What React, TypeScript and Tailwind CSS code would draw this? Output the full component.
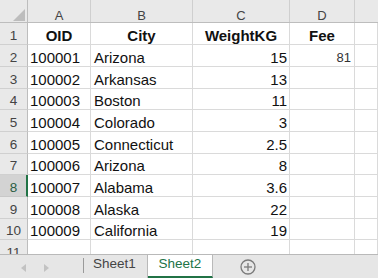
import React from "react";

const rows: { id: string; city: string; w: string; fee?: string }[] = [
  { id: "100001", city: "Arizona", w: "15", fee: "81" },
  { id: "100002", city: "Arkansas", w: "13" },
  { id: "100003", city: "Boston", w: "11" },
  { id: "100004", city: "Colorado", w: "3" },
  { id: "100005", city: "Connecticut", w: "2.5" },
  { id: "100006", city: "Arizona", w: "8" },
  { id: "100007", city: "Alabama", w: "3.6" },
  { id: "100008", city: "Alaska", w: "22" },
  { id: "100009", city: "California", w: "19" },
];

const heights = [22, 22, 22, 21, 22, 22, 21, 22, 22, 21, 22];

const cell = "border-r border-b border-[#dadada] flex items-end leading-[17px] overflow-hidden whitespace-nowrap";

function RowHead({ n, selected }: { n: number; selected?: boolean }) {
  return (
    <div
      className={
        "w-[28px] shrink-0 border-r border-b flex items-end justify-center leading-[17px] text-[13.5px] " +
        (selected
          ? "bg-[#d3d3d3] border-r-[#217346] border-r-2 w-[28px] text-[#2b5d44] border-b-[#c8c8c8]"
          : "bg-[#e9e9e9] border-r-[#bdbdbd] border-b-[#d0d0d0] text-[#444]")
      }
    >
      <span className={selected ? "pl-[1px]" : ""}>{n}</span>
    </div>
  );
}

export default function App() {
  return (
    <div
      className="w-[378px] h-[278px] overflow-hidden bg-white flex flex-col text-[#111]"
      style={{ fontFamily: '"Liberation Sans", Arial, sans-serif' }}
    >
      <div className="h-[254px] overflow-hidden flex flex-col shrink-0">
        {/* column header */}
        <div className="h-[23px] shrink-0 flex bg-[#e9e9e9] border-b border-[#bdbdbd] text-[13px] text-[#444] leading-[13px]">
          <div className="w-[28px] shrink-0 border-r border-[#bdbdbd] relative">
            <svg className="absolute left-[13px] top-[9px]" width="12" height="12" viewBox="0 0 12 12">
              <polygon points="12,0 12,12 0,12" fill="#bdbdbd" />
            </svg>
          </div>
          <div className="w-[63px] shrink-0 border-r border-[#cfcfcf] flex justify-center pt-[9px]">A</div>
          <div className="w-[102px] shrink-0 border-r border-[#cfcfcf] flex justify-center pt-[9px]">B</div>
          <div className="w-[97px] shrink-0 border-r border-[#cfcfcf] flex justify-center pt-[9px]">C</div>
          <div className="w-[65px] shrink-0 border-r border-[#cfcfcf] flex justify-center pt-[9px]">D</div>
          <div className="flex-1" />
        </div>
        {/* row 1 header */}
        <div className="flex shrink-0" style={{ height: heights[0] }}>
          <RowHead n={1} />
          <div className={cell + " w-[63px] shrink-0 justify-center font-bold text-[15px]"}>OID</div>
          <div className={cell + " w-[102px] shrink-0 justify-center font-bold text-[15px]"}>City</div>
          <div className={cell + " w-[97px] shrink-0 justify-center font-bold text-[15px]"}>WeightKG</div>
          <div className={cell + " w-[65px] shrink-0 justify-center font-bold text-[15px]"}>Fee</div>
          <div className={cell + " flex-1"} />
        </div>
        {rows.map((r, i) => (
          <div key={r.id} className="flex shrink-0" style={{ height: heights[i + 1] }}>
            <RowHead n={i + 2} selected={i + 2 === 8} />
            <div className={cell + " w-[63px] shrink-0 pl-[2px] text-[15px]"}>{r.id}</div>
            <div className={cell + " w-[102px] shrink-0 pl-[3px] text-[15px]"}>{r.city}</div>
            <div className={cell + " w-[97px] shrink-0 justify-end pr-[2px] text-[15px]"}>{r.w}</div>
            <div className={cell + " w-[65px] shrink-0 justify-end pr-[3px] text-[13px] text-[#333]"}>
              {r.fee ?? ""}
            </div>
            <div className={cell + " flex-1"} />
          </div>
        ))}
        <div className="flex shrink-0" style={{ height: 22 }}>
          <RowHead n={11} />
          <div className={cell + " w-[63px] shrink-0"} />
          <div className={cell + " w-[102px] shrink-0"} />
          <div className={cell + " w-[97px] shrink-0"} />
          <div className={cell + " w-[65px] shrink-0"} />
          <div className={cell + " flex-1"} />
        </div>
      </div>
      {/* sheet tabs */}
      <div className="flex-1 flex bg-[#e6e6e6] border-t border-[#b9b9b9] text-[13.5px] leading-[15px]">
        <div className="w-[83px] shrink-0 flex items-center pt-[2px]">
          <svg className="ml-[20px]" width="7" height="10" viewBox="0 0 7 10">
            <polygon points="6,1 6,9 1,5" fill="#c2c2c2" />
          </svg>
          <svg className="ml-[16px]" width="7" height="10" viewBox="0 0 7 10">
            <polygon points="1,1 1,9 6,5" fill="#c2c2c2" />
          </svg>
        </div>
        <div className="w-px h-[15px] mt-[3px] bg-[#9a9a9a] shrink-0" />
        <div className="w-[64px] shrink-0 border-r border-[#b9b9b9] pl-[9px] pt-[1px] text-[#444]">Sheet1</div>
        <div className="w-[65px] shrink-0 bg-white border-r border-[#b9b9b9] border-b-2 border-b-[#217346] flex justify-center pt-[1px] text-[#217346]">
          Sheet2
        </div>
        <div className="flex-1 flex items-start pl-[27px] pt-[4px]">
          <svg width="16" height="16" viewBox="0 0 16 16">
            <circle cx="8" cy="8" r="7" fill="none" stroke="#7a7a7a" strokeWidth="1.3" />
            <line x1="8" y1="4" x2="8" y2="12" stroke="#7a7a7a" strokeWidth="1.3" />
            <line x1="4" y1="8" x2="12" y2="8" stroke="#7a7a7a" strokeWidth="1.3" />
          </svg>
        </div>
      </div>
    </div>
  );
}
